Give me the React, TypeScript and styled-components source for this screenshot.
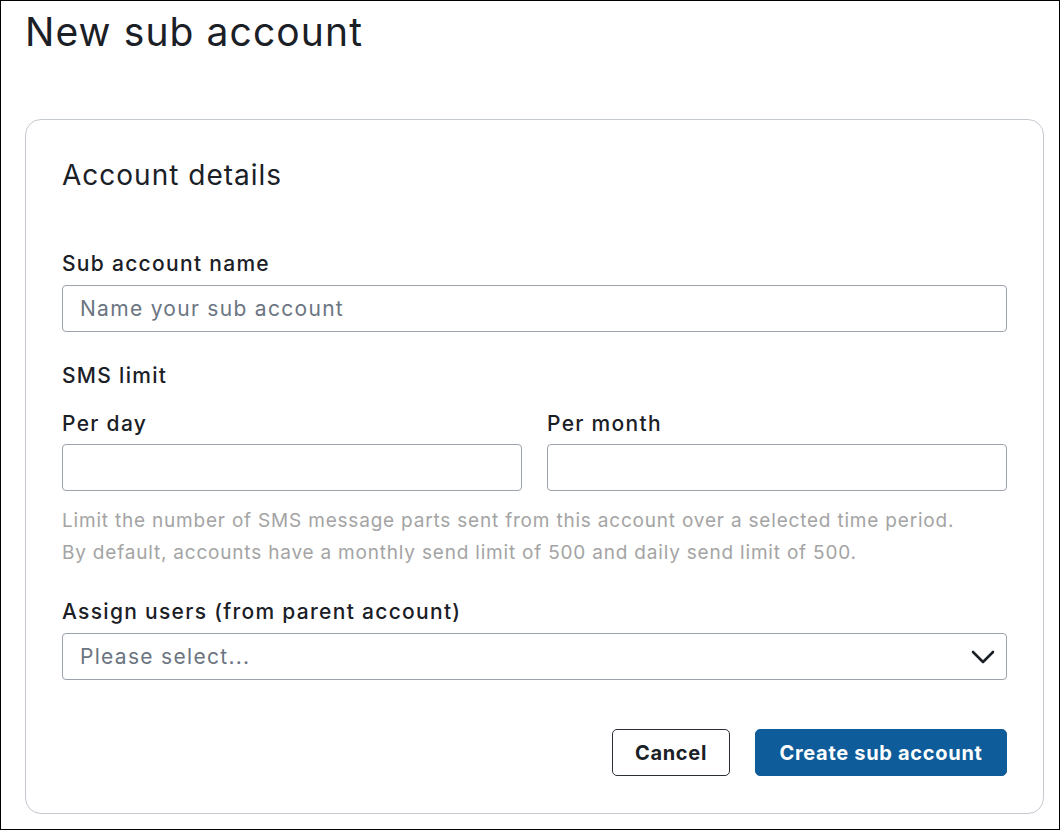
import React from "react";
import styled, { createGlobalStyle } from "styled-components";

const GlobalStyle = createGlobalStyle`
  * { box-sizing: border-box; }
  html, body { margin: 0; padding: 0; background: #fff; }
  body {
    font-family: Inter, "Noto Sans", "Liberation Sans", sans-serif;
    color: #1b2027;
  }
`;

const Page = styled.div`
  width: 1060px;
  height: 830px;
  border: 1px solid #000;
  padding: 7px 15px 0 24px;
  overflow: hidden;
`;

const Title = styled.h1`
  margin: 0 0 63px 0;
  font-size: 39px;
  line-height: 48px;
  font-weight: 400;
  letter-spacing: 1.1px;
`;

const Card = styled.section`
  border: 1px solid #c4cad0;
  border-radius: 16px;
  padding: 37px 36px 37px 36px;
`;

const CardTitle = styled.h2`
  margin: 0 0 57px 0;
  font-size: 28px;
  line-height: 36px;
  font-weight: 400;
  letter-spacing: 1px;
`;

const Field = styled.div<{ $gap?: number }>`
  display: flex;
  flex-direction: column;
  margin-bottom: ${(p) => p.$gap ?? 0}px;
`;

const Label = styled.label<{ $gap?: number }>`
  display: block;
  font-size: 21px;
  line-height: 28px;
  font-weight: 500;
  letter-spacing: 1.3px;
  margin-bottom: ${(p) => p.$gap ?? 7}px;
`;

const Input = styled.input`
  width: 100%;
  height: 47px;
  border: 1px solid #9ba2aa;
  border-radius: 4px;
  padding: 0 17px;
  font-family: inherit;
  font-size: 21px;
  letter-spacing: 1.3px;
  color: #1b2027;
  background: #fff;
  outline: none;

  &::placeholder {
    color: #6b7581;
  }
`;

const Row = styled.div`
  display: grid;
  grid-template-columns: 1fr 1fr;
  column-gap: 25px;
`;

const Help = styled.p`
  margin: 14px 0 29px 0;
  font-size: 19px;
  line-height: 32px;
  letter-spacing: 0.8px;
  color: #a4a4a4;
`;

const Select = styled.div`
  height: 47px;
  border: 1px solid #9ba2aa;
  border-radius: 4px;
  padding: 0 11px 0 17px;
  display: flex;
  align-items: center;
  justify-content: space-between;
  font-size: 21px;
  letter-spacing: 1.3px;
  color: #6b7581;
`;

const Actions = styled.div`
  display: flex;
  justify-content: flex-end;
  gap: 25px;
  margin-top: 49px;
`;

const Button = styled.button<{ $primary?: boolean }>`
  height: 47px;
  padding: 0 20px;
  border-radius: 5px;
  font-family: inherit;
  font-size: 20px;
  font-weight: 700;
  letter-spacing: 0.7px;
  cursor: pointer;
  border: 1px solid ${(p) => (p.$primary ? "#0e5c9a" : "#2a2f36")};
  background: ${(p) => (p.$primary ? "#0e5c9a" : "#fff")};
  color: ${(p) => (p.$primary ? "#fff" : "#1b2027")};
  min-width: ${(p) => (p.$primary ? "252px" : "118px")};
`;

const Chevron = () => (
  <svg width="24" height="14" viewBox="0 0 24 14" fill="none">
    <path d="M2 2l10 10 10-10" stroke="#1b2027" strokeWidth="2.6" strokeLinecap="round" strokeLinejoin="round" />
  </svg>
);

export default function App() {
  return (
    <Page>
      <GlobalStyle />
      <Title>New sub account</Title>
      <Card>
        <CardTitle>Account details</CardTitle>
        <Field $gap={30}>
          <Label>Sub account name</Label>
          <Input placeholder="Name your sub account" />
        </Field>
        <Label $gap={20}>SMS limit</Label>
        <Row>
          <Field>
            <Label $gap={6}>Per day</Label>
            <Input />
          </Field>
          <Field>
            <Label $gap={6}>Per month</Label>
            <Input />
          </Field>
        </Row>
        <Help>
          Limit the number of SMS message parts sent from this account over a selected time period.
          <br />
          By default, accounts have a monthly send limit of 500 and daily send limit of 500.
        </Help>
        <Field>
          <Label>Assign users (from parent account)</Label>
          <Select>
            <span>Please select...</span>
            <Chevron />
          </Select>
        </Field>
        <Actions>
          <Button>Cancel</Button>
          <Button $primary>Create sub account</Button>
        </Actions>
      </Card>
    </Page>
  );
}
